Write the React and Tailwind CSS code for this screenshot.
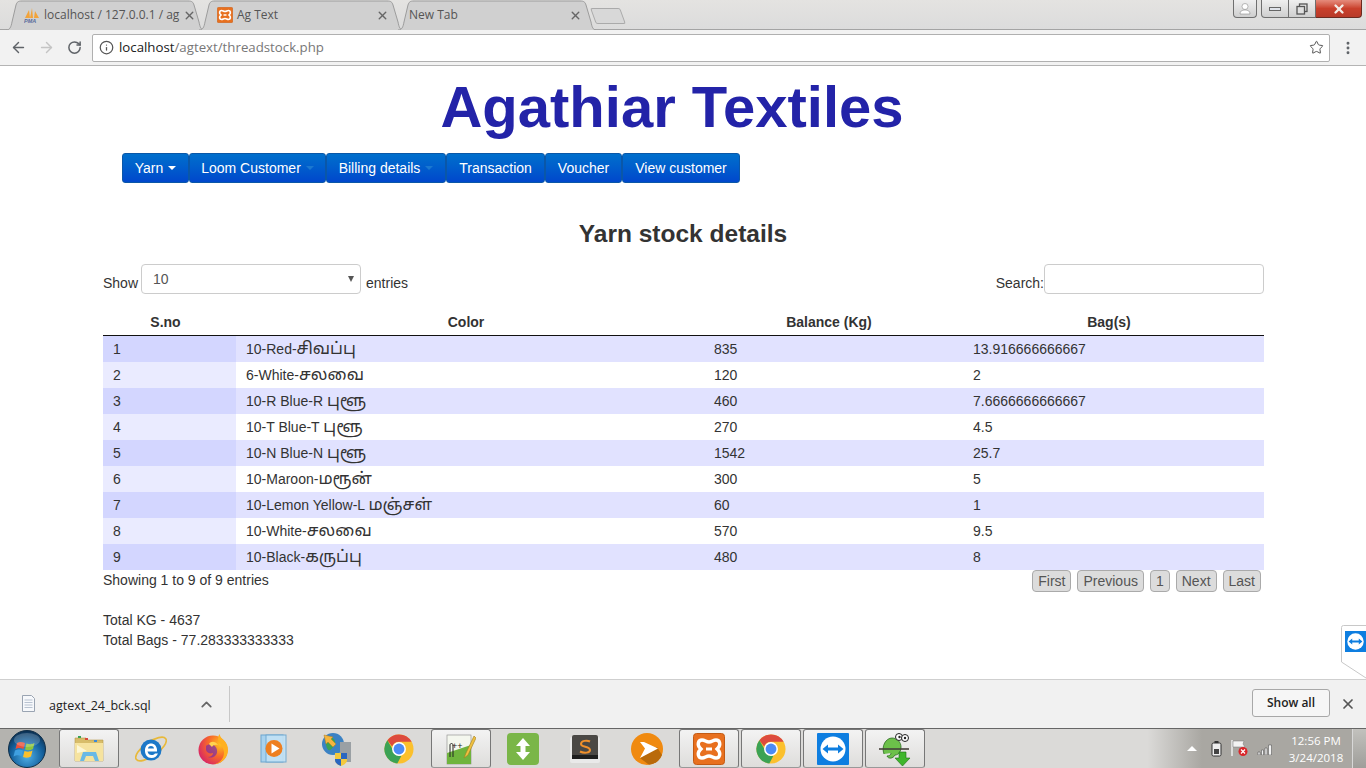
import React from "react";
import { ArrowLeft, ArrowRight, RotateCw, Info, Star, X, ChevronUp, EllipsisVertical } from "lucide-react";

const sans = "font-['Liberation_Sans','Noto_Sans','Noto_Sans_Tamil',sans-serif]";
const ui = "font-['Open_Sans','Noto_Sans',sans-serif]";

// latin part and tamil part of the colour are split, the tamil runs bigger
const rows = [
  [1, "10-Red-", "சிவப்பு", "835", "13.916666666667"],
  [2, "6-White-", "சலவை", "120", "2"],
  [3, "10-R Blue-R ", "புளூ", "460", "7.6666666666667"],
  [4, "10-T Blue-T ", "புளூ", "270", "4.5"],
  [5, "10-N Blue-N ", "புளூ", "1542", "25.7"],
  [6, "10-Maroon-", "மரூன்", "300", "5"],
  [7, "10-Lemon Yellow-L ", "மஞ்சள்", "60", "1"],
  [8, "10-White-", "சலவை", "570", "9.5"],
  [9, "10-Black-", "கருப்பு", "480", "8"],
];

// --- little logos ---
const Xampp = ({ size = 16 }) => (
  <svg width={size} height={size} viewBox="0 0 32 32">
    <rect x="0.5" y="0.5" width="31" height="31" rx="3" fill="#e8701f" stroke="#c25a14" />
    <path d="M9 7c3 0 4 2 7 2s4-2 7-2c4 0 5 5 2 8l-1 1 1 1c3 3 2 8-2 8-3 0-4-2-7-2s-4 2-7 2c-4 0-5-5-2-8l1-1-1-1c-3-3-2-8 2-8z" fill="none" stroke="#fff" strokeWidth="3.4" />
    <path d="M13 16h6" stroke="#fff" strokeWidth="3" />
  </svg>
);

const Pma = () => (
  <svg width="16" height="16" viewBox="0 0 16 16">
    <path d="M1 11 5 3l1 8zM6 11l2-10 1 10zM10 11l1-7 4 7z" fill="#f2a33a" />
    <text x="0" y="15.5" fontSize="5.5" fontWeight="700" fontStyle="italic" fill="#5a6c9c" fontFamily="Liberation Sans">PMA</text>
  </svg>
);

const Chrome = ({ size = 30 }) => (
  <svg width={size} height={size} viewBox="0 0 32 32">
    <circle cx="16" cy="16" r="15.5" fill="#fbc02d" />
    <path d="M16 .5A15.5 15.5 0 0 1 29.4 8.2H16a7.8 7.8 0 0 0-7.3 5L3.6 6.6A15.5 15.5 0 0 1 16 .5z" fill="#dd4b3e" />
    <path d="M3.6 6.6 10 17.8a7.8 7.8 0 0 0 8.6 5.5l-4.4 8.1A15.5 15.5 0 0 1 3.6 6.6z" fill="#3ba255" />
    <circle cx="16" cy="16" r="7.4" fill="#fff" />
    <circle cx="16" cy="16" r="5.8" fill="#4c8bf5" />
  </svg>
);

const TeamViewer = ({ size = 32, radius = 1 }) => (
  <svg width={size} height={size} viewBox="0 0 32 32">
    <rect width="32" height="32" rx={radius} fill="#0e7ee0" />
    <circle cx="16" cy="16" r="12.5" fill="#fff" />
    <path d="M5.5 16 11 11.5V14.5H21V11.5L26.5 16 21 20.5V17.5H11V20.5z" fill="#0e7ee0" />
  </svg>
);

const Explorer = () => (
  <svg width="32" height="32" viewBox="0 0 32 32">
    <path d="M2 5h11l2 2h15v21H2z" fill="#d8bd6a" stroke="#b99c4c" strokeWidth=".6" />
    <rect x="5" y="3" width="3" height="2" fill="#3ba255" />
    <rect x="12" y="5" width="3" height="2" fill="#d9483b" />
    <rect x="21" y="7" width="3" height="2" fill="#3c8ad8" />
    <path d="M2 10h28v18H2z" fill="#f6e39f" />
    <path d="M10 19h13l3 9h-4l-2-5h-7l-2 5H7z" fill="#6ab9e6" />
    <path d="M4 12 14 18 4 20z" fill="#fffbe2" opacity=".8" />
  </svg>
);

const IE = () => (
  <svg width="32" height="32" viewBox="0 0 32 32">
    <ellipse cx="16" cy="16" rx="18" ry="7" transform="rotate(-35 16 16)" fill="none" stroke="#e8b93a" strokeWidth="1.6" />
    <circle cx="16" cy="17" r="10.5" fill="#1c78c8" />
    <path d="M10 16.5c.5-4 3-6 6-6s5.500 2 6 6v2H12.500c.5 2.500 2 3.500 4 3.500 1.500 0 2.500-.5 3.500-1.500h3c-1.500 3-3.500 4.500-6.500 4.500-4 0-7-3.500-6.500-8.500zm3-1h6c-.3-1.800-1.500-2.500-3-2.500s-2.700.7-3 2.500z" fill="#fff" />
  </svg>
);

const Firefox = () => (
  <svg width="32" height="32" viewBox="0 0 32 32">
    <defs>
      <radialGradient id="ffx" cx="75%" cy="30%" r="85%">
        <stop offset="0" stopColor="#ffc21f" />
        <stop offset="0.5" stopColor="#f8682a" />
        <stop offset="1" stopColor="#d5216a" />
      </radialGradient>
    </defs>
    <circle cx="16" cy="17" r="14.500" fill="url(#ffx)" />
    <path d="M31 17c0 8-7 14.500-15 14.500 7-1 11-6 11-12 0-5-5-9-6-13 0-2 .5-4 1.500-5.500.5 3 2.500 4.500 5 7 2 2 3.500 5 3.500 9z" fill="#ffb01f" />
    <path d="M9 13c3-3 10-2 11 4 1 6-5 9-9 7 3 0 5-2 5-4-3 1-6 0-7-3z" fill="#7a2ca8" opacity=".7" />
    <path d="M12 11c2-3 6-3 9 1-3-.5-5 0-6 2z" fill="#ffd34f" />
  </svg>
);

const Wmp = () => (
  <svg width="32" height="32" viewBox="0 0 32 32">
    <rect x="2" y="2" width="22" height="27" fill="#a8d2ee" stroke="#6da6cf" />
    <rect x="7" y="2" width="20" height="27" fill="#c3e2f5" stroke="#6da6cf" opacity=".9" />
    <circle cx="15" cy="15.500" r="8.500" fill="#ee7f20" />
    <path d="M12.500 10.500v10l8-5z" fill="#fff" />
  </svg>
);

const NetShield = () => (
  <svg width="32" height="34" viewBox="0 0 32 34">
    <circle cx="12" cy="12" r="11" fill="#3b82c4" />
    <path d="M5 7c4-3 8-1 9 2s-2 7-5 9-5-7-4-11z" fill="#3ba255" />
    <path d="M3 3l9 2-2 2 5 5-3 3-5-5-2 2z" fill="#f4b63e" stroke="#b97f1e" strokeWidth=".5" />
    <rect x="19" y="10" width="11" height="20" fill="#9aa0a4" />
    <path d="M14 21h12v7c0 3-3 5-6 6-3-1-6-3-6-6z" fill="#f4c93e" />
    <path d="M20 21h6v6h-6zM14 27h6v7c-3-1-6-3-6-6z" fill="#2a66c0" />
  </svg>
);

const GreenUpDown = () => (
  <svg width="32" height="32" viewBox="0 0 32 32">
    <rect width="32" height="32" rx="4" fill="#7ab648" />
    <path d="M16 5l7 8h-4.500v6H23l-7 8-7-8h4.500v-6H9z" fill="#fff" />
  </svg>
);

const Sublime = () => (
  <svg width="32" height="30" viewBox="0 0 32 30">
    <rect x="1" y="3" width="30" height="26" rx="2" fill="#e9e9e9" />
    <rect x="3" y="1" width="26" height="23" rx="2" fill="#4a4845" />
    <rect x="3" y="21" width="26" height="4" fill="#1e1e1e" />
    <path d="M21 7.500c-3-1.500-9-1-9 2.500s9 2 9 6c0 3-6 3.500-10 1.500" fill="none" stroke="#f1902b" strokeWidth="2" />
  </svg>
);

const Plex = () => (
  <svg width="32" height="32" viewBox="0 0 32 32">
    <circle cx="16" cy="16" r="16" fill="#f08a10" />
    <path d="M26 14 31 22a16 16 0 0 1-13 9.800L9 25z" fill="#b96a0a" />
    <path d="M9 9h4l14 6.500L9 25l5-9.500z" fill="#fff" />
  </svg>
);

const NotepadPP = () => (
  <svg width="30" height="32" viewBox="0 0 30 32">
    <rect x="1" y="2" width="24" height="29" fill="#f4f7ee" stroke="#888" strokeWidth=".6" />
    <path d="M1 20 25 12v19H1z" fill="#6fb43d" />
    <text x="6" y="16" fontSize="9" fill="#222" fontFamily="Liberation Sans">++</text>
    <path d="M4 24V12c0-2 3-2 3 0v12" fill="none" stroke="#222" strokeWidth="1" />
    <path d="M28 3l-8 17-2 5 4-3 8-17z" fill="#f0c040" stroke="#a07d20" strokeWidth=".6" />
  </svg>
);

const Notepad2 = () => (
  <svg width="32" height="34" viewBox="0 0 32 34">
    <path d="M5 22C2 14 7 6 13 6c5 0 9 4 9 9 0 4-2 8-6 8-2 4-7 4-8 1 2 0 4-1 4-3" fill="#6cc04a" stroke="#2d6b22" strokeWidth=".8" />
    <circle cx="20" cy="5" r="3.500" fill="#fff" stroke="#222" />
    <circle cx="26" cy="6" r="3.500" fill="#fff" stroke="#222" />
    <circle cx="20.500" cy="5" r="1.200" fill="#222" />
    <circle cx="26" cy="6" r="1.200" fill="#222" />
    <path d="M0 17h30" stroke="#44403a" strokeWidth="1.600" />
    <path d="M20 20h7v6h4l-7.500 8L16 26h4z" fill="#3fb62c" stroke="#1d6f14" strokeWidth=".6" />
  </svg>
);

const StartOrb = () => (
  <svg width="38" height="38" viewBox="0 0 38 38">
    <defs>
      <radialGradient id="orb" cx="50%" cy="70%" r="70%">
        <stop offset="0" stopColor="#4fb0e8" />
        <stop offset="0.6" stopColor="#14629f" />
        <stop offset="1" stopColor="#0b2d4e" />
      </radialGradient>
    </defs>
    <circle cx="19" cy="19" r="18.500" fill="url(#orb)" stroke="#0f2e48" />
    <path d="M9 13c3-1.500 5-1 8 0l-1.500 6c-3-1-5-1.500-8 0z" fill="#e9503a" />
    <path d="M18.500 13.500c3 1 5 1 8-.5l-1.500 6c-3 1.500-5 1.500-8 .5z" fill="#8ec63f" />
    <path d="M7 20.500c3-1.500 5-1 8 0L13.500 26c-3-1-5-1-8 .5z" fill="#3f9fe0" />
    <path d="M16.500 21c3 1 5 1 8-.5L23 26.500c-3 1.500-5 1.500-8 .5z" fill="#fbc02d" />
    <ellipse cx="19" cy="10" rx="13" ry="7" fill="#fff" opacity=".2" />
  </svg>
);

// --- browser tab with its slanted shape behind the label ---
const Tab = ({ title, icon, active, width, pad }) => (
  <div className={`relative h-[30px] -mr-[5px] flex items-center ${active ? "z-10" : ""}`} style={{ width }}>
    <svg className="absolute inset-0 w-full h-full" viewBox={`0 0 ${width} 30`} preserveAspectRatio="none">
      <path
        d={`M0 30 C4 30 5 27 6 22 L10 5 C11 2 12 1 16 1 H${width - 16} C${width - 12} 1 ${width - 11} 2 ${width - 10} 5 L${width - 5} 22 C${width - 4} 27 ${width - 3} 30 ${width} 30`}
        fill={active ? "#f2f2f2" : "#d0d0d0"}
        stroke="#9c9c9c"
      />
    </svg>
    <div className={`relative flex items-center w-full ${pad} text-[12px] ${ui} text-[#333]`}>
      {icon && <span className="w-[20px] shrink-0 flex">{icon}</span>}
      <span className={`flex-1 whitespace-nowrap ${active ? "" : "text-[#555]"}`}>{title}</span>
      <X size={13} strokeWidth={2.6} className="text-[#666] shrink-0" />
    </div>
  </div>
);

const ChromeBar = () => (
  <div className="shrink-0">
    <div className="relative h-[30px] flex items-start pl-[6px] bg-gradient-to-b from-[#e4e3e1] to-[#dcdcdc] border-b border-[#a4a4a4]">
      <Tab title="localhost / 127.0.0.1 / ag" icon={<Pma />} width={198} pad="pl-[18px] pr-[8px]" />
      <Tab title="Ag Text" icon={<Xampp />} width={204} pad="pl-[18px] pr-[14px]" />
      <Tab title="New Tab" width={198} pad="pl-[11px] pr-[14px]" />
      <div className="w-[30px] h-[16px] mt-[8px] ml-[2px] bg-[#d8d8d8] border border-[#aaa] rounded-[2px] skew-x-[20deg]" />
      <div className="ml-auto flex items-start pr-[4px]">
        <div className="w-[24px] h-[18px] mr-[4px] flex items-center justify-center bg-gradient-to-b from-[#efefef] to-[#cfcfcf] border border-t-0 border-[#6f6f6f] rounded-b-[4px]">
          <svg width="12" height="12" viewBox="0 0 12 12"><circle cx="6" cy="3.500" r="3" fill="#fff" stroke="#777" strokeWidth=".5" /><path d="M1 11c0-3 2-4 5-4s5 1 5 4z" fill="#fff" stroke="#777" strokeWidth=".5" /></svg>
        </div>
        <div className="w-[28px] h-[18px] flex items-center justify-center bg-gradient-to-b from-[#efefef] to-[#cfcfcf] border border-t-0 border-[#6f6f6f] rounded-bl-[4px]">
          <span className="w-[12px] h-[4px] bg-[#dfe3ea] border border-[#666]" />
        </div>
        <div className="w-[27px] h-[18px] flex items-center justify-center bg-gradient-to-b from-[#efefef] to-[#cfcfcf] border-b border-r border-[#6f6f6f]">
          <svg width="12" height="12" viewBox="0 0 12 12" fill="none" stroke="#555" strokeWidth="1.300"><rect x="3.500" y="1" width="7.500" height="7.500" /><rect x="1" y="3.500" width="7.500" height="7.500" fill="#dfdfdf" /></svg>
        </div>
        <div className="w-[46px] h-[18px] flex items-center justify-center bg-gradient-to-b from-[#e58b7c] via-[#c9402c] to-[#b83a28] border-b border-r border-[#6b2a20] rounded-br-[4px]">
          <X size={14} strokeWidth={4} className="text-[#f3ece6]" />
        </div>
      </div>
    </div>
    <div className="h-[36px] flex items-center bg-[#f2f2f2] border-b border-[#b4b4b4] pl-[10px] pr-[10px]">
      <ArrowLeft size={17} strokeWidth={2} className="text-[#5f6368]" />
      <ArrowRight size={17} strokeWidth={2} className="ml-[11px] text-[#c4c4c4]" />
      <RotateCw size={15} strokeWidth={2.4} className="ml-[12px] text-[#5f6368]" />
      <div className="ml-[10px] flex-1 h-[28px] flex items-center bg-white border border-[#b0b0b0] rounded-[2px] pl-[6px] pr-[5px]">
        <Info size={15} strokeWidth={2} className="text-[#555]" />
        <span className={`ml-[5px] text-[13.250px] ${ui} text-[#202020]`}>localhost<span className="text-[#777]">/agtext/threadstock.php</span></span>
        <Star size={15} strokeWidth={1.600} className="ml-auto text-[#555]" />
      </div>
      <EllipsisVertical size={16} strokeWidth={2.400} className="ml-[10px] text-[#5f6368]" />
    </div>
  </div>
);

const NavItem = ({ label, caret, width }) => (
  <div
    className="h-[30px] flex items-center justify-center gap-[5px] bg-gradient-to-b from-[#006fcc] to-[#0047cc] border border-[#0a57a8] rounded-[3px] text-[14px] text-white"
    style={{ width }}
  >
    {label}
    {caret && <span className={`w-0 h-0 border-x-[4px] border-x-transparent border-t-[4px] ${caret}`} />}
  </div>
);

const PageButton = ({ children }) => (
  <div className="h-[22px] px-[5px] flex items-center bg-[#dcdcdc] border border-[#aaa] rounded-[4px] text-[14px] text-[#555]">{children}</div>
);

const Page = () => (
  <div className={`relative flex-1 min-h-0 bg-white overflow-hidden ${sans} text-[14px] text-[#333]`}>
    <h1 className="h-[86px] pt-[1px] pr-[22px] text-center text-[58px] leading-[80px] font-bold text-[#2323a8]">Agathiar Textiles</h1>
    <div className="ml-[122px] mt-px flex">
      <NavItem label="Yarn" caret="border-t-white" width={67} />
      <NavItem label="Loom Customer" caret="border-t-[#1a78d0]" width={137} />
      <NavItem label="Billing details" caret="border-t-[#1a78d0]" width={120} />
      <NavItem label="Transaction" width={99} />
      <NavItem label="Voucher" width={77} />
      <NavItem label="View customer" width={118} />
    </div>
    <h2 className="mt-[34px] h-[33px] leading-[34px] text-center text-[24.500px] font-bold text-[#333]">Yarn stock details</h2>
    <div className="ml-[103px] mr-[102px] mt-[14px] flex items-center justify-between h-[30px]">
      <div className="flex items-center gap-[3px] pt-[8px]">
        <span>Show</span>
        <div className="relative -mt-[8px] w-[220px] h-[30px] flex items-center pl-[11px] border border-[#ccc] rounded-[4px] text-[#555]">
          10
          <span className="absolute right-[6px] top-[11px] w-0 h-0 border-x-[3.500px] border-x-transparent border-t-[6px] border-t-[#555]" />
        </div>
        <span className="ml-[2px]">entries</span>
      </div>
      <div className="flex items-center">
        <span className="pt-[8px]">Search:</span>
        <div className="w-[220px] h-[30px] border border-[#ccc] rounded-[4px]" />
      </div>
    </div>
    <table className="ml-[103px] mt-[16px] w-[1161px] table-fixed border-separate border-spacing-0">
      <thead>
        <tr className="h-[26px] text-[14px] text-[#333]">
          <th className="w-[133px] pr-[8px] text-center font-bold border-b border-[#111]">S.no</th>
          <th className="w-[468px] pr-[8px] text-center font-bold border-b border-[#111]">Color</th>
          <th className="w-[259px] pr-[9px] text-center font-bold border-b border-[#111]">Balance (Kg)</th>
          <th className="pr-[9px] text-center font-bold border-b border-[#111]">Bag(s)</th>
        </tr>
      </thead>
      <tbody>
        {rows.map((r, i) => (
          <tr key={r[0]} className={`h-[26px] ${i % 2 === 0 ? "bg-[#e1e2ff]" : "bg-white"}`}>
            <td className={`pl-[10px] ${i % 2 === 0 ? "bg-[#d3d6ff]" : "bg-[#eaebff]"}`}>{r[0]}</td>
            <td className="pl-[10px] pb-[2px] leading-none whitespace-pre">{r[1]}<span className="text-[16.500px] leading-none">{r[2]}</span></td>
            <td className="pl-[10px]">{r[3]}</td>
            <td className="pl-[10px]">{r[4]}</td>
          </tr>
        ))}
      </tbody>
    </table>
    <div className="ml-[103px] w-[1161px] flex items-start justify-between">
      <span>Showing 1 to 9 of 9 entries</span>
      <div className="flex gap-[6px] pr-[3px]">
        <PageButton>First</PageButton>
        <PageButton>Previous</PageButton>
        <PageButton>1</PageButton>
        <PageButton>Next</PageButton>
        <PageButton>Last</PageButton>
      </div>
    </div>
    <div className="ml-[103px] mt-[18px] leading-[20px]">
      <div>Total KG - 4637</div>
      <div>Total Bags - 77.283333333333</div>
    </div>
    {/* TeamViewer side tab */}
    <div className="absolute right-0 top-[559px] w-[25px] h-[54px] pl-[4px] pt-[6px]">
      <svg className="absolute inset-0 w-full h-full" viewBox="0 0 25 54">
        <path d="M25 .5H2.500Q.5.5.5 2.500V37L25 53" fill="#fff" stroke="#c8c8c8" />
      </svg>
      <div className="relative">
        <TeamViewer size={21} radius={0} />
      </div>
    </div>
  </div>
);

const DownloadBar = () => (
  <div className={`shrink-0 h-[49px] flex items-center bg-[#f1f1f1] border-t border-[#cfcfcf] pl-[22px] pr-[10px] ${ui}`}>
    <svg width="13" height="17" viewBox="0 0 13 17" className="-mt-[2px]">
      <path d="M.5.5h9l3 3v13H.5z" fill="#f6f8fb" stroke="#9aa4b2" />
      <path d="M2.500 5h8M2.500 7.500h8M2.500 10h8M2.500 12.500h8" stroke="#b8c2d0" />
    </svg>
    <span className="ml-[14px] mt-[4px] w-[100px] whitespace-nowrap text-[12.500px] text-[#222]">agtext_24_bck.sql</span>
    <ChevronUp size={17} strokeWidth={2.400} className="ml-[49px] text-[#666]" />
    <span className="ml-[14px] w-px h-[36px] bg-[#c8c8c8]" />
    <div className="ml-auto -mt-[2px] w-[78px] h-[28px] flex items-center justify-center bg-white/40 border border-[#a8a8a8] rounded-[3px] text-[12px] font-semibold text-[#222]">Show all</div>
    <X size={16} strokeWidth={2.600} className="ml-[10px] text-[#555]" />
  </div>
);

const TaskSlot = ({ children, open }) => (
  <div
    className={`w-[60px] h-[39px] flex items-center justify-center rounded-[3px] ${
      open ? "bg-gradient-to-b from-[#f3f3f3] to-[#dedddb] border border-[#777] border-b-[#999]" : ""
    }`}
  >
    {children}
  </div>
);

const Taskbar = () => (
  <div className="shrink-0 h-[40px] flex items-start border-t border-[#666] bg-[linear-gradient(to_right,#dbdad8_84%,#a9a7a2_88%)]">
    <div className="w-[59px] h-full flex items-center pl-[8px] bg-[#b4b3af]">
      <StartOrb />
    </div>
    <div className="flex gap-[2px]">
      <TaskSlot open><Explorer /></TaskSlot>
      <TaskSlot><IE /></TaskSlot>
      <TaskSlot><Firefox /></TaskSlot>
      <TaskSlot><Wmp /></TaskSlot>
      <TaskSlot><NetShield /></TaskSlot>
      <TaskSlot><Chrome /></TaskSlot>
      <TaskSlot open><NotepadPP /></TaskSlot>
      <TaskSlot><GreenUpDown /></TaskSlot>
      <TaskSlot><Sublime /></TaskSlot>
      <TaskSlot><Plex /></TaskSlot>
      <TaskSlot open><Xampp size={32} /></TaskSlot>
      <TaskSlot open><Chrome /></TaskSlot>
      <TaskSlot open><TeamViewer /></TaskSlot>
      <TaskSlot open><Notepad2 /></TaskSlot>
    </div>
    <div className="ml-auto h-full flex items-center">
      <span className="w-0 h-0 border-x-[5px] border-x-transparent border-b-[5px] border-b-white" />
      <svg width="11" height="16" viewBox="0 0 11 16" className="ml-[14px]"><rect x="1" y="2" width="9" height="13" rx="1.500" fill="#eee" stroke="#333" /><rect x="3" y="8" width="5" height="5" fill="#444" /><rect x="3.500" y="0" width="4" height="2" fill="#333" /></svg>
      <svg width="18" height="17" viewBox="0 0 18 17" className="ml-[9px]"><path d="M1 0v16" stroke="#eee" strokeWidth="1.500" /><path d="M2 1h11l-1 3 2 3H2z" fill="#f3f3f3" stroke="#777" strokeWidth=".5" /><circle cx="12" cy="11.500" r="4.500" fill="#d9262a" /><path d="M10 9.500l4 4M14 9.500l-4 4" stroke="#fff" strokeWidth="1.200" /></svg>
      <svg width="16" height="12" viewBox="0 0 16 12" className="ml-[8px]"><path d="M1 9h2v3H1zM4.500 7h2v5h-2zM8 5h2v7H8zM11.500 2h3v10h-3z" fill="#f3f3f3" stroke="#444" strokeWidth=".5" /></svg>
      <div className={`ml-[12px] w-[62px] text-center text-[11.500px] leading-[17px] text-white ${ui}`}>
        <div>12:56 PM</div>
        <div>3/24/2018</div>
      </div>
      <span className="ml-[5px] w-[14px] h-full bg-gradient-to-b from-[#c2c1bd] to-[#9f9e9a] border-l border-[#d8d8d8]" />
    </div>
  </div>
);

const App = () => (
  <div className="h-screen flex flex-col overflow-hidden">
    <ChromeBar />
    <Page />
    <DownloadBar />
    <Taskbar />
  </div>
);

export default App;
